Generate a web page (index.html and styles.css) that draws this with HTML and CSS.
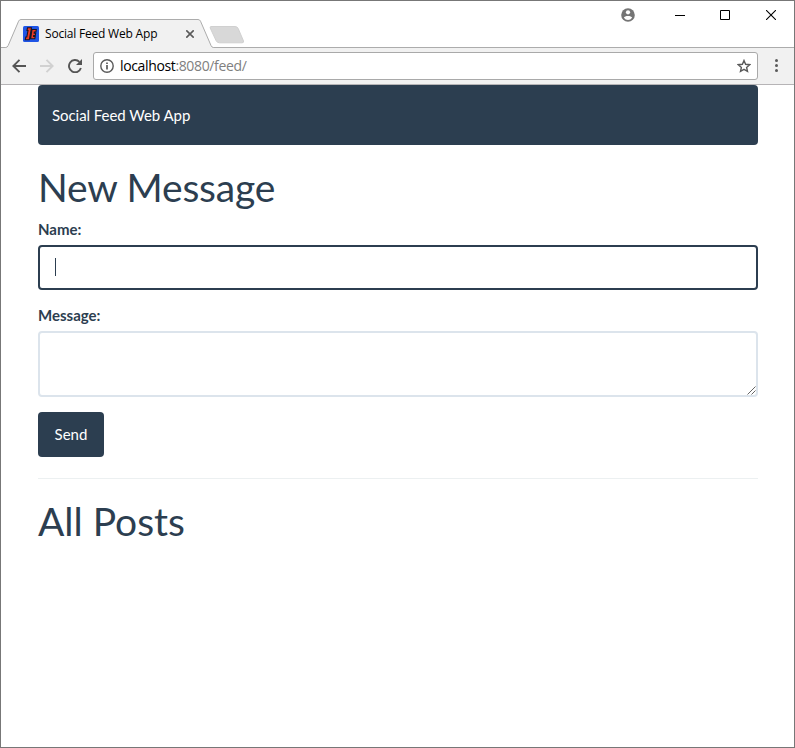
FILE: index.html
```html
<!DOCTYPE html>
<html lang="en">
<head>
<meta charset="utf-8">
<title>Social Feed Web App</title>
<link rel="stylesheet" href="styles.css">
</head>
<body>
<div class="window">
  <header class="titlebar">
    <svg class="tab-shape" width="250" height="29" viewBox="0 0 250 29">
      <path d="M0 28.5H4.5Q6.5 28.5 7.2 26.5L17.6 2.2Q18.3.5 20 .5H197Q198.800.5 199.500 2.200L210 26.500Q210.800 28.500 212.500 28.500H250V29H0Z" fill="#f1f1f1"/>
      <path d="M0 28.500H4.500Q6.500 28.500 7.200 26.500L17.600 2.200Q18.300.5 20 .5H197Q198.800.5 199.500 2.200L210 26.500Q210.800 28.500 212.500 28.500H250" fill="none" stroke="#acacac"/>
      <path d="M210 7.500H234Q236.300 7.500 237.200 9.500L242.500 22Q243 23.800 241 23.800H218.500Q216 23.800 215 21.500L209.200 9Q208.800 7.500 210 7.500Z" fill="#d8d8d8" stroke="#d0d0d0"/>
    </svg>
    <div class="tab">
      <svg class="favicon" width="16" height="16" viewBox="0 0 16 16">
        <rect width="16" height="16" rx="1.500" fill="#1f55e6"/>
        <path d="M4.500 1.800H8.500L6.300 13.800H2.300L2.800 11H3.800L5 4.500H4ZM9 3.500H13.300L12.900 6H11.300L11.200 7.200H12.700L12.300 9.500H10.700L10.600 10.500H12.200L11.800 12.800H7.600Z" fill="#ef3a23" stroke="#191624" stroke-width="1.100"/>
      </svg>
      <span class="tab-title">Social Feed Web App</span>
      <svg class="tab-close" width="8" height="8" viewBox="0 0 8 8"><path d="M.3.3 7.700 7.700M7.700.3.3 7.700" stroke="#5a5a5a" stroke-width="1.600"/></svg>
    </div>
    <div class="controls">
      <svg width="14" height="14" viewBox="0 0 14 14"><circle cx="7" cy="7" r="6.800" fill="#757575"/><circle cx="7" cy="4.300" r="2.100" fill="#fff"/><path d="M2.900 9.800C3.500 7.500 10.500 7.500 11.100 9.800Q9.500 12 7 12T2.900 9.800Z" fill="#fff"/></svg>
      <svg width="10" height="10" viewBox="0 0 10 10"><path d="M0 5.500H10" stroke="#000"/></svg>
      <svg width="10" height="10" viewBox="0 0 10 10"><path d="M.5.5H9.500V9.500H.5Z" fill="none" stroke="#000"/></svg>
      <svg width="10" height="10" viewBox="0 0 10 10"><path d="M0 0 10 10M10 0 0 10" stroke="#000" stroke-width="1.100"/></svg>
    </div>
  </header>
  <div class="toolbar">
    <svg width="14" height="14" viewBox="0 0 14 14"><path d="M14 7H1.500M7.500.8 1.300 7 7.500 13.200" fill="none" stroke="#555" stroke-width="1.900"/></svg>
    <svg width="14" height="14" viewBox="0 0 14 14"><path d="M0 7H12.500M6.500.8 12.700 7 6.500 13.200" fill="none" stroke="#d1d1d1" stroke-width="1.900"/></svg>
    <svg width="14" height="14" viewBox="0 0 14 14"><path d="M12.900 9A6.100 6.100 0 1 1 11.400 2.800" fill="none" stroke="#555" stroke-width="1.900"/><path d="M14 0V6H8Z" fill="#555"/></svg>
    <div class="address">
      <svg width="14" height="14" viewBox="0 0 14 14"><circle cx="7" cy="7" r="6.200" fill="none" stroke="#5a5a5a" stroke-width="1.400"/><path d="M7 6V10.500M7 3.400V4.900" stroke="#5a5a5a" stroke-width="1.700"/></svg>
      <span class="url">localhost<span class="path">:8080/feed/</span></span>
      <svg width="14" height="14" viewBox="0 0 14 14"><path d="M7 1.500 8.600 5.300 12.700 5.700 9.600 8.400 10.500 12.400 7 10.300 3.500 12.400 4.400 8.400 1.300 5.700 5.400 5.300Z" fill="none" stroke="#5a5a5a" stroke-width="1.400"/></svg>
    </div>
    <svg class="menu" width="3" height="13" viewBox="0 0 3 13"><g fill="#5a5a5a"><circle cx="1.500" cy="1.500" r="1.500"/><circle cx="1.500" cy="6.500" r="1.500"/><circle cx="1.500" cy="11.500" r="1.500"/></g></svg>
  </div>
  <main class="container">
    <nav class="navbar">Social Feed Web App</nav>
    <h1 class="new-message">New Message</h1>
    <form>
      <label for="name">Name:</label>
      <div class="field"><input id="name" class="control focused" type="text"><span class="caret"></span></div>
      <label for="message">Message:</label>
      <div class="field"><textarea id="message" class="control"></textarea>
        <svg class="grip" width="9" height="9" viewBox="0 0 9 9"><path d="M.5 8.500 8.500.5M4.500 8.500 8.500 4.500" stroke="#555" stroke-width=".9"/></svg></div>
      <button type="button">Send</button>
    </form>
    <hr>
    <h1>All Posts</h1>
  </main>
</div>
</body>
</html>
```
FILE: styles.css
```css
* { box-sizing: border-box; }
body { margin: 0; }
svg { display: block; flex: none; }
.window {
  height: 748px;
  border: 1px solid #777;
  background: #fff;
  overflow: hidden;
  font: 15px/21.43px Lato, sans-serif;
  color: #2c3e50;
}
.titlebar {
  position: relative;
  display: flex;
  justify-content: space-between;
  height: 47px;
  border-bottom: 1px solid #acacac;
}
.tab-shape { position: absolute; left: 0; top: 18px; }
.tab {
  position: relative;
  display: flex;
  align-items: center;
  width: 194px;
  margin: 19px 0 0 22px;
  height: 28px;
  padding-right: 23px;
  font: 12px/16px "Open Sans", sans-serif;
  color: #000;
}
.tab-title { margin-left: 6px; white-space: nowrap; letter-spacing: -.2px; flex: 1; }
.controls {
  display: flex;
  align-items: center;
  height: 28px;
  padding-right: 18px;
}
.controls svg + svg { margin-left: 36px; }
.controls svg:nth-child(2) { margin-left: 40px; }
.controls svg:nth-child(3) { margin-left: 35px; }
.toolbar {
  display: flex;
  align-items: center;
  height: 37px;
  padding: 0 16px 1px 11px;
  border-bottom: 1px solid #b6b4b6;
  background: #f1f1f1;
}
.toolbar > svg:not(.menu) { margin-right: 14px; }
.toolbar > svg:nth-child(3):not(.menu) { margin-right: 11px; }
.address {
  display: flex;
  align-items: center;
  flex: 1;
  height: 28px;
  margin-right: 17px;
  padding: 0 6px;
  border: 1px solid #a9a9a9;
  border-radius: 3px;
  background: #fff;
  font: 14px/20px "Open Sans", sans-serif;
  color: #000;
}
.url { flex: 1; margin-left: 6px; letter-spacing: -.36px; }
.path { color: #808080; }
.container { width: 720px; margin: 0 auto 0 37px; }
.navbar {
  height: 60px;
  padding: 20px 14px;
  border-radius: 4px;
  background: #2c3e50;
  color: #fff;
  letter-spacing: -.05px;
}
h1 { margin: 21px 0 10px; font-size: 39px; line-height: 43px; font-weight: 400; }
.new-message { letter-spacing: -.2px; }
label { display: block; height: 21px; margin-bottom: 5px; font-weight: 700; }
.field { position: relative; margin-bottom: 15px; }
.control {
  display: block;
  width: 100%;
  height: 45px;
  padding: 10px 15px;
  border: 2px solid #dce4ec;
  border-radius: 4px;
  background: #fff;
  font: inherit;
  outline: 0;
}
textarea.control { height: 66px; resize: none; }
.focused { border-color: #2c3e50; }
.caret { position: absolute; left: 17px; top: 13px; width: 1px; height: 18px; background: #2c3e50; }
.grip { position: absolute; right: 2px; bottom: 2px; }
button {
  display: block;
  width: 66px;
  height: 45px;
  padding: 0;
  border: 0;
  border-radius: 4px;
  background: #2c3e50;
  color: #fff;
  font: inherit;
}
hr { margin: 21px 0; border: 0; border-top: 1px solid #ecf0f1; }
```
